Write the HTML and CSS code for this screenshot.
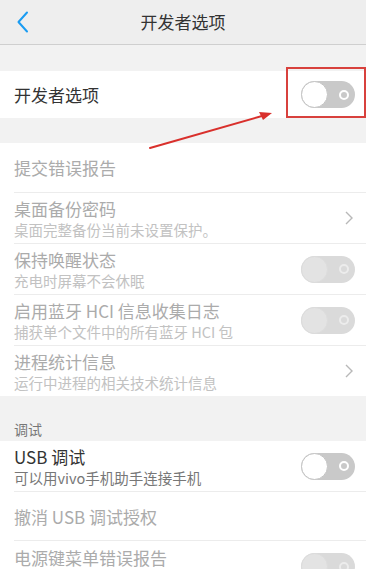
FILE: index.html
```html
<!DOCTYPE html>
<html lang="zh-CN">
<head>
<meta charset="utf-8">
<title>开发者选项</title>
<link rel="stylesheet" href="styles.css">
</head>
<body>
<div class="page">
  <header class="topbar">
    <span class="back">
      <svg width="14" height="22" viewBox="0 0 14 22"><path d="M11 1.5 L2.5 11 L11 20.5" fill="none" stroke="#1a9cf2" stroke-width="2" stroke-linecap="round" stroke-linejoin="round"/></svg>
    </span>
    <h1 class="title">开发者选项</h1>
  </header>

  <div class="gap gap-top"></div>
  <section class="group">
    <div class="row row-master">
      <div class="texts"><div class="t">开发者选项</div></div>
      <span class="switch"><span class="knob"></span><span class="ring"></span></span>
    </div>
  </section>

  <div class="gap gap-mid"></div>
  <section class="group">
    <div class="row row-single dis">
      <div class="texts"><div class="t">提交错误报告</div></div>
    </div>
    <div class="row dis">
      <div class="texts"><div class="t">桌面备份密码</div><div class="s">桌面完整备份当前未设置保护。</div></div>
      <span class="chev"><svg width="8" height="14" viewBox="0 0 8 14"><path d="M1 1 L7 7 L1 13" fill="none" stroke="#b8b8b8" stroke-width="1.4"/></svg></span>
    </div>
    <div class="row dis">
      <div class="texts"><div class="t">保持唤醒状态</div><div class="s">充电时屏幕不会休眠</div></div>
      <span class="switch off"><span class="knob"></span><span class="ring"></span></span>
    </div>
    <div class="row dis">
      <div class="texts"><div class="t">启用蓝牙 HCI 信息收集日志</div><div class="s">捕获单个文件中的所有蓝牙 HCI 包</div></div>
      <span class="switch off"><span class="knob"></span><span class="ring"></span></span>
    </div>
    <div class="row dis last">
      <div class="texts"><div class="t">进程统计信息</div><div class="s">运行中进程的相关技术统计信息</div></div>
      <span class="chev"><svg width="8" height="14" viewBox="0 0 8 14"><path d="M1 1 L7 7 L1 13" fill="none" stroke="#b8b8b8" stroke-width="1.4"/></svg></span>
    </div>
  </section>

  <div class="label">调试</div>
  <section class="group">
    <div class="row">
      <div class="texts"><div class="t">USB 调试</div><div class="s">可以用vivo手机助手连接手机</div></div>
      <span class="switch"><span class="knob"></span><span class="ring"></span></span>
    </div>
    <div class="row row-single short dis">
      <div class="texts"><div class="t">撤消 USB 调试授权</div></div>
    </div>
    <div class="row dis last top">
      <div class="texts"><div class="t">电源键菜单错误报告</div></div>
      <span class="switch off"><span class="knob"></span><span class="ring"></span></span>
    </div>
  </section>

  <div class="highlight"></div>
  <svg class="arrow" width="366" height="569" viewBox="0 0 366 569">
    <line x1="150" y1="148" x2="262" y2="116" stroke="#d9302c" stroke-width="2" stroke-linecap="round"/>
    <path d="M272 113 L259 112 L263 120 Z" fill="#d9302c"/>
  </svg>
</div>
</body>
</html>
```
FILE: styles.css
```css
* { box-sizing: border-box; margin: 0; padding: 0; }
html, body { width: 366px; height: 569px; overflow: hidden; }
body {
  background: #f2f2f2;
  font-family: "Noto Sans CJK SC", "Noto Sans", sans-serif;
  color: #333;
}
.page { position: relative; width: 366px; height: 569px; overflow: hidden; }

.topbar {
  height: 45px;
  background: #eeeeee;
  border-bottom: 1px solid #cfcfcf;
  display: flex;
  align-items: center;
  justify-content: center;
  position: relative;
}
.back { position: absolute; left: 16px; top: 11px; display: flex; }
.title { font-size: 17px; font-weight: normal; color: #333; line-height: 20px; }

.gap-top { height: 26px; }
.gap-mid { height: 25px; }

.group { background: #fff; }

.row {
  display: flex;
  align-items: center;
  margin-left: 14px;
  padding-right: 11px;
  height: 51px;
  border-bottom: 1px solid #ececec;
}
.row.last { border-bottom: none; height: 50px; }
.row-single { height: 50px; }
.row-single.short { height: 49px; }
.row-master { height: 47px; border-bottom: none; }
.row.top { height: 51px; }
.row.top .texts { align-self: flex-start; padding-top: 6px; }

.texts { flex: 1; display: flex; flex-direction: column; }
.t { font-size: 17px; line-height: 21px; color: #333; }
.s { font-size: 14.5px; line-height: 18px; color: #777; margin-top: 2px; }
.dis .t { color: #ababab; }
.dis .s { color: #c2c2c2; }

.chev { display: flex; width: 8px; margin-right: 2px; }

.switch {
  position: relative;
  width: 54px;
  height: 27px;
  border-radius: 14px;
  background: #c9c9c9;
  flex: none;
}
.switch .knob {
  position: absolute;
  left: 0;
  top: 0;
  width: 27px;
  height: 27px;
  border-radius: 50%;
  background: #fff;
  border: 1px solid #c4c4c4;
}
.switch .ring {
  position: absolute;
  right: 6px;
  top: 8.5px;
  width: 10px;
  height: 10px;
  border-radius: 50%;
  border: 2px solid #fff;
  background: #c9c9c9;
}
.switch.off { background: #dadada; }
.switch.off .knob { background: #e3e3e3; border-color: #dcdcdc; }
.switch.off .ring { border-color: #ececec; background: #dadada; }

.label {
  height: 45px;
  display: flex;
  align-items: flex-end;
  padding-left: 14px;
  padding-bottom: 3px;
  font-size: 14px;
  line-height: 18px;
  color: #777;
}

.highlight {
  position: absolute;
  left: 286px;
  top: 67px;
  width: 80px;
  height: 51px;
  border: 2px solid #d8413d;
}
.arrow { position: absolute; left: 0; top: 0; pointer-events: none; }
```
